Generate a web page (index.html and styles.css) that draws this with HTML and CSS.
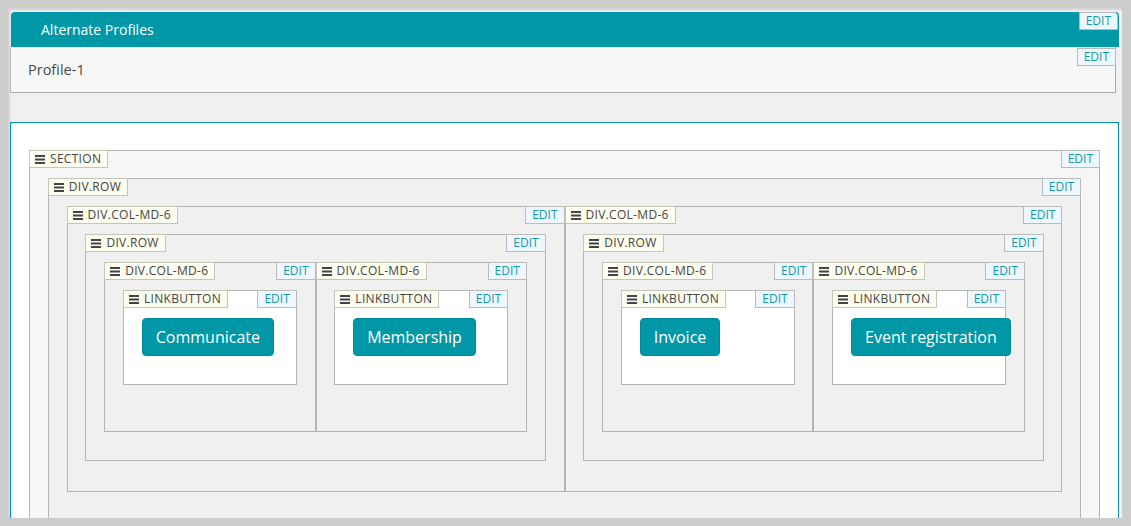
FILE: index.html
```html
<!DOCTYPE html>
<html lang="en">
<head>
  <meta charset="UTF-8" />
  <title>Alternate Profiles</title>
  <link rel="stylesheet" href="styles.css">
</head>
<body>
  <div class="canvas">
    <div class="panel-head">
      <span>Alternate Profiles</span>
      <a class="edit head-edit">EDIT</a>
    </div>
    <div class="profile">
      <span>Profile-1</span>
      <a class="edit">EDIT</a>
    </div>

    <div class="zone">
      <!-- section -->
      <div class="node section">
        <div class="node-head">
          <span class="tag"><svg class="grip" viewBox="0 0 10 9"><rect y="0" width="10" height="2"/><rect y="3.5" width="10" height="2"/><rect y="7" width="10" height="2"/></svg>SECTION</span>
          <a class="edit">EDIT</a>
        </div>

        <div class="node row">
          <div class="node-head">
            <span class="tag"><svg class="grip" viewBox="0 0 10 9"><rect y="0" width="10" height="2"/><rect y="3.5" width="10" height="2"/><rect y="7" width="10" height="2"/></svg>DIV.ROW</span>
            <a class="edit">EDIT</a>
          </div>
          <div class="cols">

            <!-- left column -->
            <div class="node col">
              <div class="node-head">
                <span class="tag"><svg class="grip" viewBox="0 0 10 9"><rect y="0" width="10" height="2"/><rect y="3.5" width="10" height="2"/><rect y="7" width="10" height="2"/></svg>DIV.COL-MD-6</span>
                <a class="edit">EDIT</a>
              </div>
              <div class="node row">
                <div class="node-head">
                  <span class="tag"><svg class="grip" viewBox="0 0 10 9"><rect y="0" width="10" height="2"/><rect y="3.5" width="10" height="2"/><rect y="7" width="10" height="2"/></svg>DIV.ROW</span>
                  <a class="edit">EDIT</a>
                </div>
                <div class="cols">
                  <div class="node col leaf">
                    <div class="node-head">
                      <span class="tag"><svg class="grip" viewBox="0 0 10 9"><rect y="0" width="10" height="2"/><rect y="3.5" width="10" height="2"/><rect y="7" width="10" height="2"/></svg>DIV.COL-MD-6</span>
                      <a class="edit">EDIT</a>
                    </div>
                    <div class="node link">
                      <div class="node-head">
                        <span class="tag"><svg class="grip" viewBox="0 0 10 9"><rect y="0" width="10" height="2"/><rect y="3.5" width="10" height="2"/><rect y="7" width="10" height="2"/></svg>LINKBUTTON</span>
                        <a class="edit">EDIT</a>
                      </div>
                      <a class="btn">Communicate</a>
                    </div>
                  </div>
                  <div class="node col leaf">
                    <div class="node-head">
                      <span class="tag"><svg class="grip" viewBox="0 0 10 9"><rect y="0" width="10" height="2"/><rect y="3.5" width="10" height="2"/><rect y="7" width="10" height="2"/></svg>DIV.COL-MD-6</span>
                      <a class="edit">EDIT</a>
                    </div>
                    <div class="node link">
                      <div class="node-head">
                        <span class="tag"><svg class="grip" viewBox="0 0 10 9"><rect y="0" width="10" height="2"/><rect y="3.5" width="10" height="2"/><rect y="7" width="10" height="2"/></svg>LINKBUTTON</span>
                        <a class="edit">EDIT</a>
                      </div>
                      <a class="btn">Membership</a>
                    </div>
                  </div>
                </div>
              </div>
            </div>

            <!-- right column -->
            <div class="node col">
              <div class="node-head">
                <span class="tag"><svg class="grip" viewBox="0 0 10 9"><rect y="0" width="10" height="2"/><rect y="3.5" width="10" height="2"/><rect y="7" width="10" height="2"/></svg>DIV.COL-MD-6</span>
                <a class="edit">EDIT</a>
              </div>
              <div class="node row">
                <div class="node-head">
                  <span class="tag"><svg class="grip" viewBox="0 0 10 9"><rect y="0" width="10" height="2"/><rect y="3.5" width="10" height="2"/><rect y="7" width="10" height="2"/></svg>DIV.ROW</span>
                  <a class="edit">EDIT</a>
                </div>
                <div class="cols">
                  <div class="node col leaf">
                    <div class="node-head">
                      <span class="tag"><svg class="grip" viewBox="0 0 10 9"><rect y="0" width="10" height="2"/><rect y="3.5" width="10" height="2"/><rect y="7" width="10" height="2"/></svg>DIV.COL-MD-6</span>
                      <a class="edit">EDIT</a>
                    </div>
                    <div class="node link">
                      <div class="node-head">
                        <span class="tag"><svg class="grip" viewBox="0 0 10 9"><rect y="0" width="10" height="2"/><rect y="3.5" width="10" height="2"/><rect y="7" width="10" height="2"/></svg>LINKBUTTON</span>
                        <a class="edit">EDIT</a>
                      </div>
                      <a class="btn">Invoice</a>
                    </div>
                  </div>
                  <div class="node col leaf">
                    <div class="node-head">
                      <span class="tag"><svg class="grip" viewBox="0 0 10 9"><rect y="0" width="10" height="2"/><rect y="3.5" width="10" height="2"/><rect y="7" width="10" height="2"/></svg>DIV.COL-MD-6</span>
                      <a class="edit">EDIT</a>
                    </div>
                    <div class="node link">
                      <div class="node-head">
                        <span class="tag"><svg class="grip" viewBox="0 0 10 9"><rect y="0" width="10" height="2"/><rect y="3.5" width="10" height="2"/><rect y="7" width="10" height="2"/></svg>LINKBUTTON</span>
                        <a class="edit">EDIT</a>
                      </div>
                      <a class="btn">Event registration</a>
                    </div>
                  </div>
                </div>
              </div>
            </div>

          </div>
        </div>
      </div>
    </div>
  </div>
</body>
</html>
```

FILE: styles.css
```css
:root {
  --teal: #0097a7;
  --line: #b4b4b4;
  --pad: 17.8px;
  --font: 'Open Sans', 'Liberation Sans', sans-serif;
}

* {
  box-sizing: border-box;
}

body {
  margin: 0;
  height: 526px;
  padding: 8px 9px 0 8px;
  background: #ccc;
  font-family: var(--font);
  overflow: hidden;
}

.canvas {
  height: 510px;
  padding: 4px 3px 0 2px;
  background: #f0f0f0;
  box-shadow: inset 2px 2px 2px rgba(0, 0, 0, 0.12);
  overflow: hidden;
}

/* top panel */
.panel-head {
  display: flex;
  justify-content: space-between;
  align-items: center;
  height: 35px;
  margin-left: 1px;
  padding-left: 30px;
  background: var(--teal);
  border-radius: 4px 4px 0 0;
  color: #fff;
  font-size: 14px;
}

.panel-head .head-edit {
  align-self: flex-start;
  margin-right: 1px;
  border-top-right-radius: 4px;
}

.profile {
  display: flex;
  justify-content: space-between;
  align-items: center;
  height: 46px;
  margin-right: 3px;
  padding-left: 17px;
  background: #f7f7f7;
  border-left: 1px solid #bbb;
  border-right: 1px solid #aaa;
  border-bottom: 1px solid #aaa;
  color: #4a4a4a;
  font-size: 14.5px;
}

.profile .edit {
  align-self: flex-start;
  margin-top: 1px;
  margin-right: -1px;
}

.edit {
  display: block;
  padding: 0 6px;
  border: 1px solid #bbb;
  background: #eef7fd;
  color: #1499ab;
  font-size: 12px;
  line-height: 16px;
  cursor: pointer;
}

/* design surface */
.zone {
  margin-top: 29px;
  padding: 27px 18px 0 18px;
  border: 1px solid var(--teal);
  background: #fff;
  box-shadow: inset 3px 0 4px -2px rgba(0, 0, 0, 0.08);
}

.node {
  min-width: 0;
  padding: 0 var(--pad) 28px;
  border: 1px solid var(--line);
  background: #f0f0f0;
}

.node-head {
  display: flex;
  justify-content: space-between;
  align-items: flex-start;
  margin: -1px calc(-1px - var(--pad)) 10px;
}

.tag {
  display: flex;
  align-items: center;
  gap: 5px;
  padding: 0 6px 0 5px;
  border: 1px solid #c6c6b8;
  background: #fdfdf0;
  color: #444;
  font-size: 12px;
  line-height: 16px;
  letter-spacing: 0.3px;
}

.grip {
  width: 10px;
  height: 9px;
  fill: #444;
}

.section {
  background: #f6f6f6;
}

.cols {
  display: grid;
  grid-template-columns: minmax(0, 1fr) minmax(0, 1fr);
}

.col {
  padding-bottom: 30px;
}

.col.leaf {
  padding-bottom: 46px;
}

.link {
  background: #fff;
}

.btn {
  display: block;
  width: max-content;
  height: 38px;
  padding: 0 13px;
  border: 1px solid #00899a;
  border-radius: 4px;
  background: var(--teal);
  color: #fff;
  font-size: 16px;
  line-height: 36px;
  white-space: nowrap;
  cursor: pointer;
}
```
